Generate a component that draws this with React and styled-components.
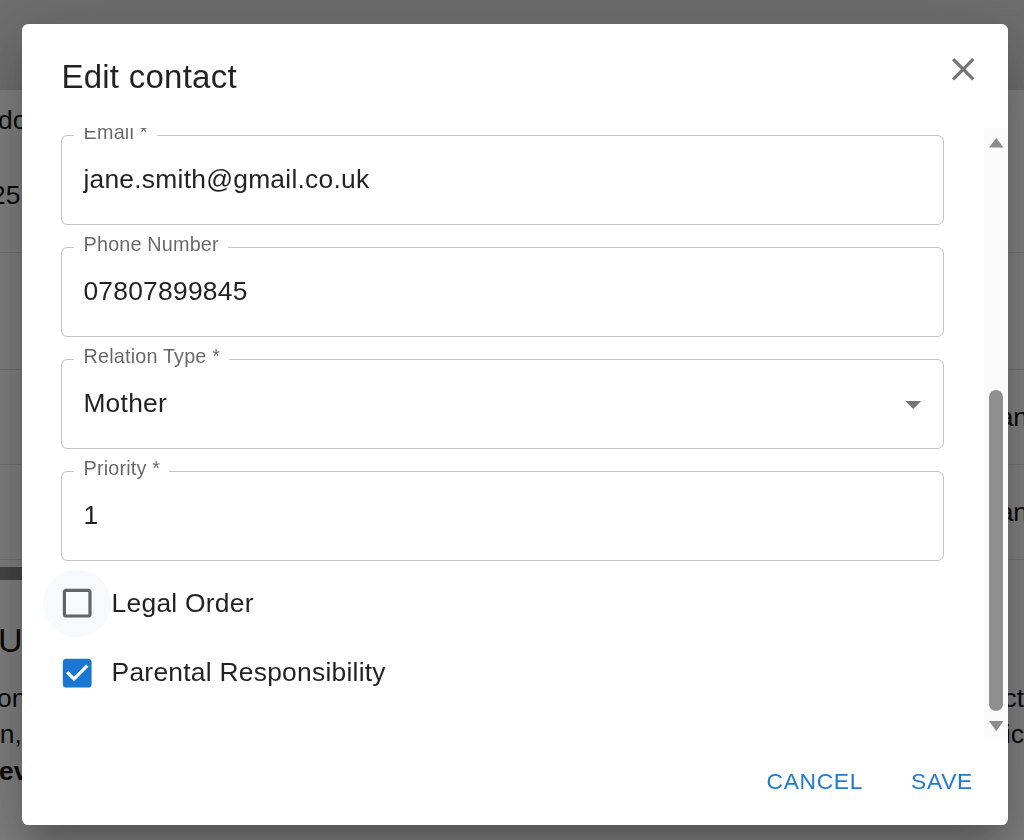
import React, { useLayoutEffect, useRef, useState, useCallback } from "react";
import styled, { createGlobalStyle } from "styled-components";

const FONT = `"Liberation Sans", Arial, Helvetica, sans-serif`;

const GlobalStyle = createGlobalStyle`
  html, body { margin: 0; padding: 0; }
  body {
    font-family: ${FONT};
    background: #fff;
    color: #000;
    overflow: hidden;
  }
  * { box-sizing: border-box; }
`;

/* ---------- background page (dimmed behind the dialog) ---------- */

const Page = styled.div`
  width: 1024px;
  height: 840px;
  overflow: hidden;
  background: #fff;
  font-size: 26.4px;
  color: #111;
`;

const Header = styled.header`
  height: 90px;
  background: #dcdcdc;
`;

const Row = styled.div`
  height: ${(p) => p.$h}px;
  border-bottom: 1px solid #e2e2e2;
  display: flex;
  justify-content: space-between;
  align-items: ${(p) => (p.$top ? "flex-start" : "center")};
  white-space: nowrap;
`;

const RowCell = styled.div`
  display: flex;
  flex-direction: column;
  padding-top: ${(p) => p.$pt || 0}px;
  line-height: 38.4px;
`;

const CellText = styled.span`
  margin-left: ${(p) => p.$ml || 0}px;
  margin-right: ${(p) => p.$mr || 0}px;
  margin-top: ${(p) => p.$mt || 0}px;
`;

const HScroll = styled.div`
  margin-top: 7px;
  height: 13px;
  width: 36%;
  background: #8a8a8a;
`;

const SectionHeading = styled.h3`
  margin: 40px 0 0 -2px;
  font-size: 34px;
  font-weight: 400;
  line-height: 40.8px;
  white-space: nowrap;
`;

const Paragraph = styled.div`
  margin-top: 19px;
  line-height: 36.6px;
`;

const ParaLine = styled.div`
  display: flex;
  justify-content: space-between;
  white-space: nowrap;
  font-weight: ${(p) => (p.$bold ? 700 : 400)};
`;

/* ---------- dialog ---------- */

const Backdrop = styled.div`
  position: fixed;
  inset: 0;
  background: rgba(0, 0, 0, 0.5);
  display: flex;
  padding: 24px 16px 15px 22px;
`;

const Dialog = styled.div`
  flex: 1;
  background: #fff;
  border-radius: 6.4px;
  display: flex;
  flex-direction: column;
  overflow: hidden;
  box-shadow: 0 17.6px 24px -11.2px rgba(0, 0, 0, 0.2),
    0 38.4px 60.8px 4.8px rgba(0, 0, 0, 0.14),
    0 14.4px 73.6px 12.8px rgba(0, 0, 0, 0.12);
`;

const TitleBar = styled.div`
  display: flex;
  align-items: flex-start;
  height: 104px;
  flex-shrink: 0;
`;

const Title = styled.h2`
  margin: 0;
  padding: 27px 0 0 39.4px;
  font-size: 33px;
  font-weight: 400;
  line-height: 51.2px;
  letter-spacing: 0.25px;
  color: rgba(0, 0, 0, 0.87);
`;

const CloseButton = styled.button`
  margin: 12.8px 12.8px 0 auto;
  width: 64px;
  height: 64px;
  padding: 0;
  border: 0;
  border-radius: 50%;
  background: transparent;
  display: flex;
  align-items: center;
  justify-content: center;
  color: rgba(0, 0, 0, 0.54);
  cursor: pointer;
`;

const ContentArea = styled.div`
  flex: 1;
  min-height: 0;
  display: flex;
`;

const Viewport = styled.div`
  flex: 1;
  min-width: 0;
  overflow-y: scroll;
  scrollbar-width: none;
  &::-webkit-scrollbar {
    display: none;
  }
`;

const Scrollbar = styled.div`
  width: 24px;
  flex-shrink: 0;
  background: #fafafa;
  display: flex;
  flex-direction: column;
`;

const ScrollArrow = styled.div`
  height: 24px;
  flex-shrink: 0;
  display: flex;
  color: #8c8c8c;
`;

const ScrollTrack = styled.div`
  flex: 1;
  min-height: 0;
  display: flex;
  flex-direction: column;
  align-items: center;
`;

const ScrollThumb = styled.div`
  width: 14px;
  flex-shrink: 0;
  border-radius: 7px;
  background: #8f8f8f;
`;

const ContentInner = styled.div`
  padding: 12px 40px 37px 39px;
  display: flex;
  flex-direction: column;
`;

const Fields = styled.div`
  display: flex;
  flex-direction: column;
  gap: 22px;
`;

const Field = styled.div`
  position: relative;
  height: 90px;
  border: 1px solid rgba(0, 0, 0, 0.23);
  border-radius: 6.4px;
  display: flex;
  align-items: center;
  padding: 0 ${(p) => (p.$select ? 10.8 : 21.4)}px 0 21.4px;
`;

const FieldLabel = styled.label`
  position: absolute;
  top: -3px;
  left: 12px;
  transform: translateY(-50%);
  padding: 0 9.2px 0 9.6px;
  background: #fff;
  font-size: 19.8px;
  line-height: 1;
  letter-spacing: 0.18px;
  color: rgba(0, 0, 0, 0.6);
  white-space: nowrap;
`;

const ValueInput = styled.input`
  flex: 1;
  min-width: 0;
  height: 37.9px;
  padding: 0;
  border: 0;
  outline: 0;
  background: transparent;
  font-family: inherit;
  font-size: 26.4px;
  line-height: 37.9px;
  letter-spacing: 0.25px;
  color: rgba(0, 0, 0, 0.87);
`;

const SelectValue = styled.div`
  flex: 1;
  font-size: 26.4px;
  line-height: 37.9px;
  letter-spacing: 0.25px;
  color: rgba(0, 0, 0, 0.87);
`;

const SelectIcon = styled.span`
  display: flex;
  color: rgba(0, 0, 0, 0.54);
`;

const CheckGroup = styled.div`
  margin-top: 9px;
  display: flex;
  flex-direction: column;
  gap: 2px;
`;

const CheckRow = styled.label`
  display: flex;
  align-items: center;
  margin-left: -17.6px;
  cursor: pointer;
`;

const CheckButton = styled.span`
  width: 67.2px;
  height: 67.2px;
  border-radius: 50%;
  display: flex;
  align-items: center;
  justify-content: center;
  flex-shrink: 0;
  background: ${(p) => (p.$hover ? "rgba(25, 118, 210, 0.04)" : "transparent")};
  color: ${(p) => (p.$checked ? "#1976d2" : "rgba(0, 0, 0, 0.6)")};
`;

const CheckLabel = styled.span`
  margin-left: 1px;
  font-size: 26.4px;
  line-height: 1.5;
  letter-spacing: 0.25px;
  color: rgba(0, 0, 0, 0.87);
`;

const Actions = styled.div`
  flex-shrink: 0;
  height: 87px;
  display: flex;
  justify-content: flex-end;
  align-items: center;
  gap: 15px;
  padding: 0 14.8px 0 12.8px;
`;

const TextButton = styled.button`
  min-width: 102.4px;
  padding: 9.6px 12.8px;
  border: 0;
  border-radius: 6.4px;
  background: transparent;
  font-family: inherit;
  font-size: 22.8px;
  font-weight: 400;
  line-height: 39.2px;
  letter-spacing: 0.66px;
  text-transform: uppercase;
  color: #1f7bd6;
  cursor: pointer;
`;

const Icon = ({ d, size = 38.4 }) => (
  <svg width={size} height={size} viewBox="0 0 24 24" fill="currentColor" aria-hidden="true">
    <path d={d} />
  </svg>
);

const CLOSE = "M19 6.41 17.59 5 12 10.59 6.41 5 5 6.41 10.59 12 5 17.59 6.41 19 12 13.41 17.59 19 19 17.59 13.41 12z";
const DROP = "M7 10l5 5 5-5z";
const BOX_BLANK = "M19 5v14H5V5h14m0-2H5c-1.1 0-2 .9-2 2v14c0 1.1.9 2 2 2h14c1.1 0 2-.9 2-2V5c0-1.1-.9-2-2-2z";
const BOX_CHECKED =
  "M19 3H5c-1.11 0-2 .9-2 2v14c0 1.1.89 2 2 2h14c1.11 0 2-.9 2-2V5c0-1.1-.89-2-2-2zm-9 14l-5-5 1.41-1.41L10 14.17l7.59-7.59L19 8l-7 7z";

const textFields = [
  { label: "First Name *", value: "Jane" },
  { label: "Last Name *", value: "Smith" },
  { label: "Address", value: "12 Oak Road, London" },
  { label: "Postcode", value: "N1 7GU" },
  { label: "Email *", value: "jane.smith@gmail.co.uk" },
  { label: "Phone Number", value: "07807899845" },
];

export default function App() {
  const viewportRef = useRef(null);
  const trackRef = useRef(null);
  const [thumb, setThumb] = useState({ top: 0, height: 0 });

  const measure = useCallback(() => {
    const v = viewportRef.current;
    const t = trackRef.current;
    if (!v || !t) return;
    const trackH = t.clientHeight;
    const ratio = v.clientHeight / v.scrollHeight;
    const height = Math.max(20, trackH * ratio);
    const maxScroll = v.scrollHeight - v.clientHeight;
    const top = maxScroll > 0 ? ((trackH - height) * v.scrollTop) / maxScroll : 0;
    setThumb({ top, height });
  }, []);

  useLayoutEffect(() => {
    if (viewportRef.current) viewportRef.current.scrollTop = 453;
    measure();
  }, [measure]);

  return (
    <>
      <GlobalStyle />
      <Page>
        <Header />
        <Row $h={163} $top>
          <RowCell $pt={10.8}>
            <CellText $ml={-2}>dob</CellText>
            <CellText $ml={-9} $mt={36.6}>25, Elm</CellText>
          </RowCell>
        </Row>
        <Row $h={117} />
        <Row $h={95}>
          <span />
          <CellText $mr={-4}>Plan</CellText>
        </Row>
        <Row $h={95}>
          <span />
          <CellText $mr={-4}>Plan</CellText>
        </Row>
        <HScroll />
        <SectionHeading>Useful information</SectionHeading>
        <Paragraph>
          <ParaLine>
            <CellText $ml={-3}>once</CellText>
            <span>contact</span>
          </ParaLine>
          <ParaLine>
            <CellText $ml={-6}>in,</CellText>
            <span>specific</span>
          </ParaLine>
          <ParaLine $bold>
            <CellText $ml={-1}>every</CellText>
          </ParaLine>
        </Paragraph>
      </Page>

      <Backdrop>
        <Dialog role="dialog" aria-labelledby="edit-contact-title">
          <TitleBar>
            <Title id="edit-contact-title">Edit contact</Title>
            <CloseButton aria-label="close">
              <Icon d={CLOSE} />
            </CloseButton>
          </TitleBar>

          <ContentArea>
            <Viewport ref={viewportRef} onScroll={measure}>
              <ContentInner>
                <Fields>
                  {textFields.map((f) => (
                    <Field key={f.label}>
                      <FieldLabel>{f.label}</FieldLabel>
                      <ValueInput readOnly defaultValue={f.value} />
                    </Field>
                  ))}
                  <Field $select>
                    <FieldLabel>Relation Type *</FieldLabel>
                    <SelectValue>Mother</SelectValue>
                    <SelectIcon>
                      <Icon d={DROP} />
                    </SelectIcon>
                  </Field>
                  <Field>
                    <FieldLabel>Priority *</FieldLabel>
                    <ValueInput readOnly defaultValue="1" />
                  </Field>
                </Fields>

                <CheckGroup>
                  <CheckRow>
                    <CheckButton $hover>
                      <Icon d={BOX_BLANK} />
                    </CheckButton>
                    <CheckLabel>Legal Order</CheckLabel>
                  </CheckRow>
                  <CheckRow>
                    <CheckButton $checked>
                      <Icon d={BOX_CHECKED} />
                    </CheckButton>
                    <CheckLabel>Parental Responsibility</CheckLabel>
                  </CheckRow>
                </CheckGroup>
              </ContentInner>
            </Viewport>

            <Scrollbar aria-hidden="true">
              <ScrollArrow>
                <svg width="24" height="24" viewBox="0 0 24 24" fill="currentColor">
                  <polygon points="5,19.5 19.5,19.5 12.25,10" />
                </svg>
              </ScrollArrow>
              <ScrollTrack ref={trackRef}>
                <ScrollThumb style={{ marginTop: thumb.top, height: thumb.height }} />
              </ScrollTrack>
              <ScrollArrow>
                <svg width="24" height="24" viewBox="0 0 24 24" fill="currentColor">
                  <polygon points="5,7 19.5,7 12.25,17" />
                </svg>
              </ScrollArrow>
            </Scrollbar>
          </ContentArea>

          <Actions>
            <TextButton>Cancel</TextButton>
            <TextButton>Save</TextButton>
          </Actions>
        </Dialog>
      </Backdrop>
    </>
  );
}
